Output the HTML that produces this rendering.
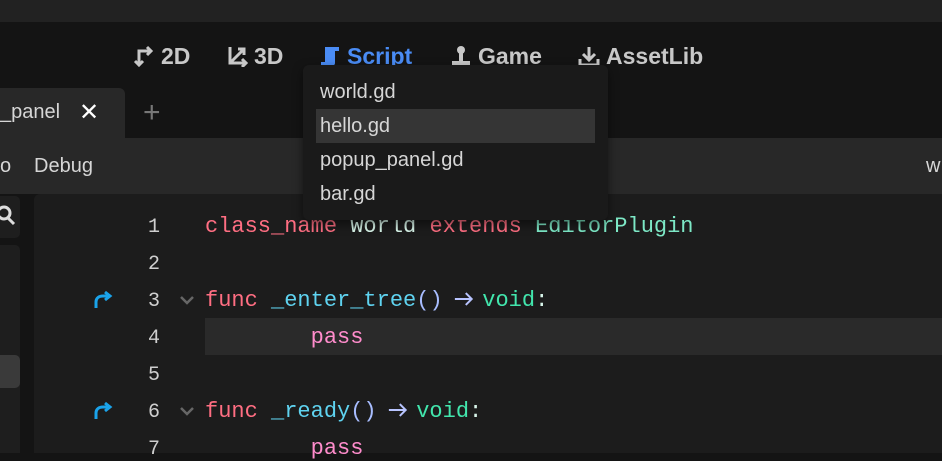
<!DOCTYPE html>
<html><head><style>
*{margin:0;padding:0;box-sizing:border-box}
body{width:942px;height:453px;overflow:hidden;background:#141414;font-family:"Liberation Sans",sans-serif;position:relative}
.a{position:absolute}
.tab{font-weight:bold;font-size:23px;color:#c8c8c8;top:42px;height:28px;line-height:28px;display:flex;align-items:center;gap:6px}
.ln{position:absolute;right:0;width:40px;text-align:right;color:#cfcfcf;font-family:"Liberation Mono",monospace;font-size:20px}
.code{position:absolute;left:205px;white-space:pre;font-family:"Liberation Mono",monospace;font-size:22px}
.k{color:#ff6e82}.g{color:#7de8c6}.w{color:#d8f5ea}.f{color:#5fd3f0}.p{color:#a8bdff}.v{color:#42e6ad}.s{color:#ff8ccc}
.ar{display:inline-block;width:39.6px;height:20px;vertical-align:-3px;text-align:center}
.dd div{height:34px;line-height:34px;padding-left:4px;font-size:20px;color:#d6d6d6}
</style></head><body>
<div class="a" style="left:0;top:0;width:942px;height:22px;background:#222"></div>

<div class="a tab" style="left:133px"><svg width="22" height="22" viewBox="0 0 22 22" fill="none" stroke="#c8c8c8" stroke-width="3"><path d="M6 20V6h12M14 2l4 4-4 4M2 16l4 4 4-4"/></svg>2D</div>
<div class="a tab" style="left:226px"><svg width="22" height="22" viewBox="0 0 22 22" fill="none" stroke="#c8c8c8" stroke-width="3"><path d="M4 2v16h16M4 18L18 4M12 4h6v6M16 14l4 4-4 4"/></svg>3D</div>
<div class="a tab" style="left:319px;color:#4a8cf5"><svg width="22" height="22" viewBox="0 0 22 22"><path d="M6 2h14v4h-4v12c0 2-2 3-4 3H2v-4h4z" fill="#4a8cf5"/></svg>Script</div>
<div class="a tab" style="left:450px"><svg width="22" height="22" viewBox="0 0 22 22" fill="#c8c8c8"><circle cx="11" cy="5" r="4"/><rect x="9" y="8" width="4" height="8"/><rect x="2" y="16" width="18" height="5"/></svg>Game</div>
<div class="a tab" style="left:578px"><svg width="22" height="22" viewBox="0 0 22 22" fill="none" stroke="#c8c8c8" stroke-width="3"><path d="M11 2v12M5 9l6 6 6-6M2 14v6h18v-6"/></svg>AssetLib</div>

<div class="a" style="left:0;top:88px;width:125px;height:50px;background:#282828;border-top-right-radius:6px"></div>
<div class="a" style="left:0;top:101px;font-size:20px;color:#d6d6d6">_panel</div>
<div class="a" style="left:79px;top:98px;font-size:24px;color:#fff">✕</div>
<div class="a" style="left:143px;top:98px;font-size:30px;color:#777;line-height:30px">+</div>

<div class="a" style="left:0;top:138px;width:942px;height:56px;background:#282828"></div>
<div class="a" style="left:0;top:155px;font-size:20px;color:#d6d6d6">o</div>
<div class="a" style="left:34px;top:155px;font-size:20px;color:#d6d6d6">Debug</div>
<div class="a" style="left:926px;top:155px;font-size:20px;color:#d6d6d6">w</div>

<div class="a" style="left:0;top:194px;width:942px;height:259px;background:#141414"></div>
<div class="a" style="left:0;top:196px;width:20px;height:42px;background:#1e1e1e;border-radius:0 5px 5px 0"></div>
<svg class="a" style="left:0;top:204px" width="16" height="22" viewBox="0 0 16 22" fill="none" stroke="#ddd" stroke-width="3"><circle cx="4" cy="9" r="6"/><path d="M8 14l6 6"/></svg>
<div class="a" style="left:0;top:245px;width:20px;height:208px;background:#1e1e1e;border-radius:0 5px 0 0"></div>
<div class="a" style="left:0;top:355px;width:20px;height:33px;background:#3a3a3a;border-radius:0 5px 5px 0"></div>

<div class="a" style="left:34px;top:194px;width:908px;height:259px;background:#1c1c1c;border-top-left-radius:6px"></div>
<div class="a" style="left:205px;top:318px;width:737px;height:37px;background:#2a2a2a"></div>

<div class="a" style="left:120px;top:197px;width:40px;height:259px">
<div class="ln" style="top:19px">1</div><div class="ln" style="top:56px">2</div><div class="ln" style="top:93px">3</div><div class="ln" style="top:130px">4</div><div class="ln" style="top:167px">5</div><div class="ln" style="top:204px">6</div><div class="ln" style="top:241px">7</div>
</div>
<svg class="a" style="left:93px;top:289px" width="20" height="20" viewBox="0 0 20 20" fill="none" stroke="#1aa3ea" stroke-width="3"><path d="M3 19v-6c0-4 3-6 7-6h6M12 3l5 4-5 4"/></svg>
<svg class="a" style="left:93px;top:400px" width="20" height="20" viewBox="0 0 20 20" fill="none" stroke="#1aa3ea" stroke-width="3"><path d="M3 19v-6c0-4 3-6 7-6h6M12 3l5 4-5 4"/></svg>
<svg class="a" style="left:180px;top:295px" width="14" height="10" viewBox="0 0 14 10" fill="none" stroke="#666" stroke-width="2.5"><path d="M1 2l6 6 6-6"/></svg>
<svg class="a" style="left:180px;top:406px" width="14" height="10" viewBox="0 0 14 10" fill="none" stroke="#666" stroke-width="2.5"><path d="M1 2l6 6 6-6"/></svg>

<div class="code" style="top:214px"><span class="k">class_name</span> <span class="w">World</span> <span class="k">extends</span> <span class="g">EditorPlugin</span></div>
<div class="code" style="top:288px"><span class="k">func</span> <span class="f">_enter_tree</span><span class="p">()</span><svg class="ar" viewBox="0 0 40 20" fill="none" stroke="#b8c4ff" stroke-width="2"><path d="M12 10h17M23 4l6 6-6 6"/></svg><span class="v">void</span><span class="w">:</span></div>
<div class="code" style="top:325px">        <span class="s">pass</span></div>
<div class="code" style="top:399px"><span class="k">func</span> <span class="f">_ready</span><span class="p">()</span><svg class="ar" viewBox="0 0 40 20" fill="none" stroke="#b8c4ff" stroke-width="2"><path d="M12 10h17M23 4l6 6-6 6"/></svg><span class="v">void</span><span class="w">:</span></div>
<div class="code" style="top:436px">        <span class="s">pass</span></div>

<div class="a dd" style="left:303px;top:65px;width:305px;height:155px;background:#1a1a1a;border-radius:6px;box-shadow:0 4px 10px rgba(0,0,0,.5);padding:10px 13px 0 13px">
<div>world.gd</div><div style="background:#353535">hello.gd</div><div>popup_panel.gd</div><div>bar.gd</div>
</div>
</body></html>
